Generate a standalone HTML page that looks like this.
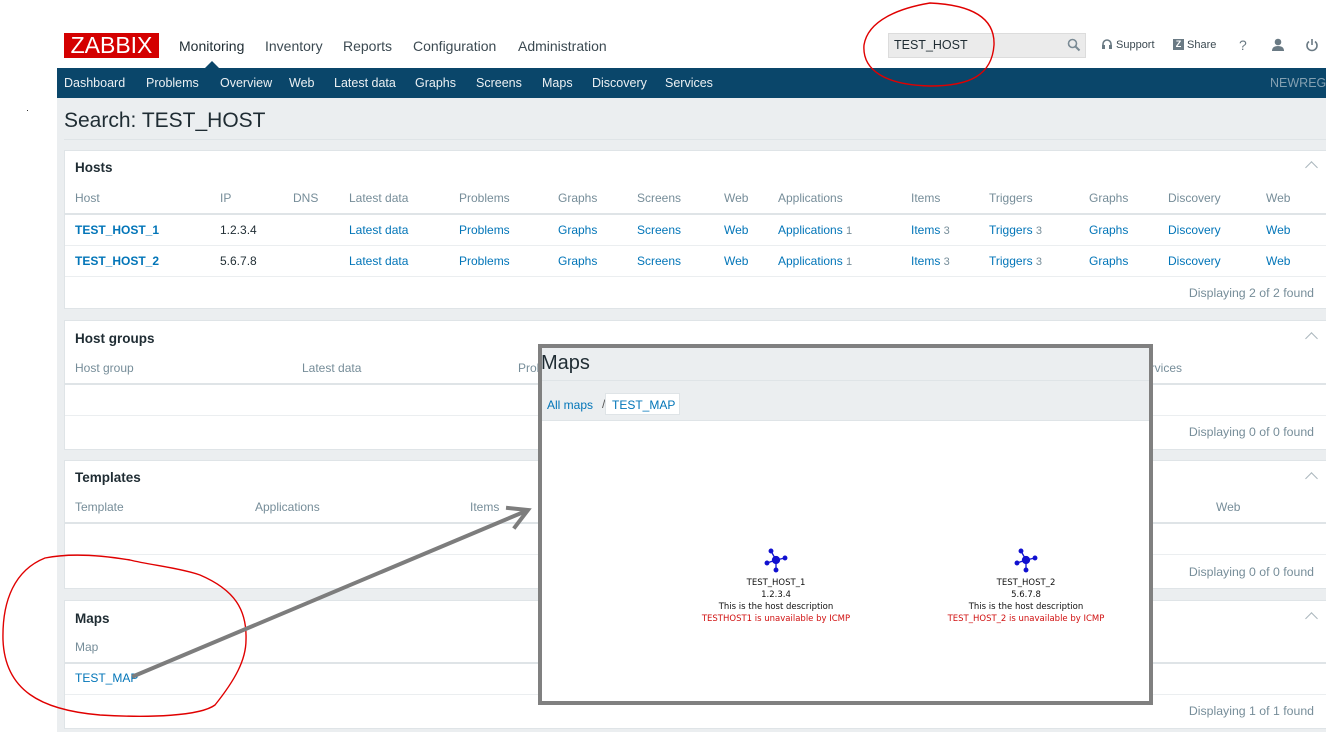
<!DOCTYPE html>
<html><head><meta charset="utf-8"><style>
*{margin:0;padding:0;box-sizing:border-box}
body{width:1326px;height:732px;position:relative;overflow:hidden;background:#fff;font-family:"Liberation Sans",Arial,sans-serif;font-size:12px;color:#1f2c33}
.a{position:absolute;white-space:nowrap}
.bar{position:absolute;left:57px;top:68px;width:1269px;height:30px;background:#0a466a}
.bar span{position:absolute;top:8px;color:#fff;font-size:12.5px;opacity:.92}
.grey{position:absolute;left:57px;top:98px;width:1269px;height:634px;background:#ebeef0}
.panel{position:absolute;left:64px;width:1262px;background:#fff;border:1px solid #dfe4e7;border-right:none}
.panel .t{position:absolute;left:10px;font-weight:bold;font-size:13.5px;color:#1f2c33}
.h{position:absolute;color:#768d99;margin-left:-1px;margin-top:-1px}
.l{position:absolute;color:#0275b8;margin-left:-1px;margin-top:-1px}
.b{font-weight:bold}
.line2{position:absolute;left:0;right:0;height:2px;background:#dfe4e7}
.line1{position:absolute;left:0;right:0;height:1px;background:#ebeef0}
.foot{position:absolute;right:12px;color:#768d99;margin-top:-1px;font-size:12.3px}
.chev{position:absolute;right:10px;width:9px;height:9px;border-left:1.5px solid #aab6bd;border-top:1.5px solid #aab6bd;transform:rotate(45deg)}
.n{color:#768d99;font-size:11px}
</style></head><body>
<div class="a" style="left:64px;top:33px;width:95px;height:25px;background:#d40000;color:#fff;font-size:23px;line-height:25px;text-align:center">ZABBIX</div>
<div class="a" style="left:179px;top:38px;font-size:14px;color:#1f2c33">Monitoring</div>
<div class="a" style="left:265px;top:38px;font-size:14px;color:#3c4a52">Inventory</div>
<div class="a" style="left:343px;top:38px;font-size:14px;color:#3c4a52">Reports</div>
<div class="a" style="left:413px;top:38px;font-size:14px;color:#3c4a52">Configuration</div>
<div class="a" style="left:518px;top:38px;font-size:14px;color:#3c4a52">Administration</div>
<div class="a" style="left:205px;top:61px;width:0;height:0;border-left:7px solid transparent;border-right:7px solid transparent;border-bottom:7px solid #0a466a"></div>
<div class="a" style="left:888px;top:33px;width:198px;height:25px;background:#ebebeb;border:1px solid #dcdcdc"></div>
<div class="a" style="left:894px;top:38px;font-size:12.5px;color:#1f2c33">TEST_HOST</div>
<svg class="a" style="left:1067px;top:38px" width="14" height="14"><circle cx="5.5" cy="5.5" r="4" fill="none" stroke="#7a8a94" stroke-width="1.6"/><line x1="8.5" y1="8.5" x2="12.5" y2="12.5" stroke="#7a8a94" stroke-width="2"/></svg>
<svg class="a" style="left:1101px;top:39px" width="12" height="12"><path d="M2 7V5a4 4 0 0 1 8 0v2" fill="none" stroke="#6a7a84" stroke-width="1.6"/><rect x="1" y="6" width="3" height="4" fill="#6a7a84"/><rect x="8" y="6" width="3" height="4" fill="#6a7a84"/></svg>
<div class="a" style="left:1116px;top:39px;font-size:11px;color:#3c4a52">Support</div>
<div class="a" style="left:1173px;top:39px;width:11px;height:11px;background:#6a7a84;color:#fff;font-size:9px;font-weight:bold;text-align:center;line-height:11px">Z</div>
<div class="a" style="left:1187px;top:39px;font-size:11px;color:#3c4a52">Share</div>
<div class="a" style="left:1239px;top:37px;font-size:14px;color:#6a7a84">?</div>
<svg class="a" style="left:1271px;top:38px" width="14" height="14"><circle cx="7" cy="4" r="3.3" fill="#6a7a84"/><path d="M1 13q0-5 6-5t6 5z" fill="#6a7a84"/></svg>
<svg class="a" style="left:1305px;top:38px" width="14" height="14"><path d="M4 3.5a5 5 0 1 0 6 0" fill="none" stroke="#6a7a84" stroke-width="1.6"/><line x1="7" y1="1" x2="7" y2="7" stroke="#6a7a84" stroke-width="1.6"/></svg>
<div class="bar">
<span style="left:7px">Dashboard</span><span style="left:89px">Problems</span><span style="left:163px">Overview</span><span style="left:232px">Web</span><span style="left:277px">Latest data</span><span style="left:358px">Graphs</span><span style="left:419px">Screens</span><span style="left:485px">Maps</span><span style="left:535px">Discovery</span><span style="left:608px">Services</span>
<span style="left:1213px;color:#8fa8b8">NEWREG</span></div>
<div class="a" style="left:27px;top:110px;width:1px;height:1px;background:#333"></div>
<div class="grey"></div>
<div class="a" style="left:64px;top:109px;font-size:21px;color:#1f2c33">Search: TEST_HOST</div>
<div class="a" style="left:64px;top:139px;width:1262px;height:1px;background:#dfe4e7"></div>

<div class="panel" style="top:150px;height:159px">
<div class="t" style="top:9px">Hosts</div><div class="chev" style="top:12px"></div>
<div class="h" style="left:11px;top:41px">Host</div><div class="h" style="left:156px;top:41px">IP</div><div class="h" style="left:229px;top:41px">DNS</div><div class="h" style="left:285px;top:41px">Latest data</div><div class="h" style="left:395px;top:41px">Problems</div><div class="h" style="left:494px;top:41px">Graphs</div><div class="h" style="left:573px;top:41px">Screens</div><div class="h" style="left:660px;top:41px">Web</div><div class="h" style="left:714px;top:41px">Applications</div><div class="h" style="left:847px;top:41px">Items</div><div class="h" style="left:925px;top:41px">Triggers</div><div class="h" style="left:1025px;top:41px">Graphs</div><div class="h" style="left:1104px;top:41px">Discovery</div><div class="h" style="left:1202px;top:41px">Web</div>
<div class="line2" style="top:62px"></div>
<div class="l b" style="left:11px;top:73px">TEST_HOST_1</div><div class="a" style="left:155px;top:72px">1.2.3.4</div><div class="l" style="left:285px;top:73px">Latest data</div><div class="l" style="left:395px;top:73px">Problems</div><div class="l" style="left:494px;top:73px">Graphs</div><div class="l" style="left:573px;top:73px">Screens</div><div class="l" style="left:660px;top:73px">Web</div><div class="l" style="left:714px;top:73px">Applications <span class="n">1</span></div><div class="l" style="left:847px;top:73px">Items <span class="n">3</span></div><div class="l" style="left:925px;top:73px">Triggers <span class="n">3</span></div><div class="l" style="left:1025px;top:73px">Graphs</div><div class="l" style="left:1104px;top:73px">Discovery</div><div class="l" style="left:1202px;top:73px">Web</div>
<div class="line1" style="top:94px"></div>
<div class="l b" style="left:11px;top:104px">TEST_HOST_2</div><div class="a" style="left:155px;top:103px">5.6.7.8</div><div class="l" style="left:285px;top:104px">Latest data</div><div class="l" style="left:395px;top:104px">Problems</div><div class="l" style="left:494px;top:104px">Graphs</div><div class="l" style="left:573px;top:104px">Screens</div><div class="l" style="left:660px;top:104px">Web</div><div class="l" style="left:714px;top:104px">Applications <span class="n">1</span></div><div class="l" style="left:847px;top:104px">Items <span class="n">3</span></div><div class="l" style="left:925px;top:104px">Triggers <span class="n">3</span></div><div class="l" style="left:1025px;top:104px">Graphs</div><div class="l" style="left:1104px;top:104px">Discovery</div><div class="l" style="left:1202px;top:104px">Web</div>
<div class="line1" style="top:125px"></div>
<div class="foot" style="top:136px">Displaying 2 of 2 found</div>
</div>

<div class="panel" style="top:320px;height:130px">
<div class="t" style="top:10px">Host groups</div><div class="chev" style="top:13px"></div>
<div class="h" style="left:11px;top:41px">Host group</div><div class="h" style="left:238px;top:41px">Latest data</div><div class="h" style="left:454px;top:41px">Problems</div><div class="h" style="left:1072px;top:41px">Services</div>
<div class="line2" style="top:62px"></div><div class="line1" style="top:94px"></div>
<div class="foot" style="top:105px">Displaying 0 of 0 found</div>
</div>

<div class="panel" style="top:460px;height:129px">
<div class="t" style="top:9px">Templates</div><div class="chev" style="top:13px"></div>
<div class="h" style="left:11px;top:40px">Template</div><div class="h" style="left:191px;top:40px">Applications</div><div class="h" style="left:406px;top:40px">Items</div><div class="h" style="left:1152px;top:40px">Web</div>
<div class="line2" style="top:61px"></div><div class="line1" style="top:93px"></div>
<div class="foot" style="top:105px">Displaying 0 of 0 found</div>
</div>

<div class="panel" style="top:600px;height:129px">
<div class="t" style="top:10px">Maps</div><div class="chev" style="top:13px"></div>
<div class="h" style="left:11px;top:40px">Map</div>
<div class="line2" style="top:61px"></div>
<div class="l" style="left:11px;top:71px">TEST_MAP</div>
<div class="line1" style="top:93px"></div>
<div class="foot" style="top:104px">Displaying 1 of 1 found</div>
</div>

<div class="a" style="left:538px;top:344px;width:615px;height:361px;border:4px solid #808080;background:#fff">
<div class="a" style="left:0;top:0;width:607px;height:73px;background:#ebeef0;border-bottom:1px solid #dfe4e7"></div>
<div class="a" style="left:0;top:32px;width:607px;height:1px;background:#dfe4e7"></div>
<div class="a" style="left:-1px;top:4px;font-size:20px;color:#1f2c33">Maps</div>
<div class="a" style="left:5px;top:50px;color:#0275b8">All maps</div>
<div class="a" style="left:60px;top:49px;color:#555">/</div>
<div class="a" style="left:63px;top:45px;width:75px;height:22px;background:#fff;border:1px solid #dfe4e7"></div>
<div class="a" style="left:70px;top:50px;color:#0275b8">TEST_MAP</div>
<svg class="a" style="left:220px;top:198px" width="30" height="30"><g stroke="#1010d0" stroke-width="1.3" fill="#1010d0"><line x1="14" y1="14" x2="9" y2="5"/><line x1="14" y1="14" x2="23" y2="12"/><line x1="14" y1="14" x2="5" y2="17"/><line x1="14" y1="14" x2="14" y2="24"/><circle cx="14" cy="14" r="3.5"/><circle cx="9" cy="5" r="1.8"/><circle cx="23" cy="12" r="1.8"/><circle cx="5" cy="17" r="1.8"/><circle cx="14" cy="24" r="1.8"/></g></svg>
<svg class="a" style="left:470px;top:198px" width="30" height="30"><g stroke="#1010d0" stroke-width="1.3" fill="#1010d0"><line x1="14" y1="14" x2="9" y2="5"/><line x1="14" y1="14" x2="23" y2="12"/><line x1="14" y1="14" x2="5" y2="17"/><line x1="14" y1="14" x2="14" y2="24"/><circle cx="14" cy="14" r="3.5"/><circle cx="9" cy="5" r="1.8"/><circle cx="23" cy="12" r="1.8"/><circle cx="5" cy="17" r="1.8"/><circle cx="14" cy="24" r="1.8"/></g></svg>
<div class="a" style="left:134px;top:229px;width:200px;text-align:center;font-family:'DejaVu Sans',sans-serif;font-size:8.5px;line-height:12px;color:#111">TEST_HOST_1<br>1.2.3.4<br>This is the host description<br><span style="color:#d01010">TESTHOST1 is unavailable by ICMP</span></div>
<div class="a" style="left:384px;top:229px;width:200px;text-align:center;font-family:'DejaVu Sans',sans-serif;font-size:8.5px;line-height:12px;color:#111">TEST_HOST_2<br>5.6.7.8<br>This is the host description<br><span style="color:#d01010">TEST_HOST_2 is unavailable by ICMP</span></div>
</div>

<svg class="a" style="left:0;top:0" width="1326" height="732">
<g fill="none" stroke="#e00000" stroke-width="1.4">
<path d="M930 3C900 8 868 20 864 45C862 70 885 85 930 86C970 86 992 75 994 45C995 20 975 5 930 3Z"/>
<path d="M45 558C15 570 2 600 3 640C5 690 40 710 100 715C150 718 200 716 215 705C235 680 246 660 246 640C247 610 235 590 200 575C180 568 150 565 130 560C100 555 70 553 45 558Z"/>
</g>
<g stroke="#7d7d7d" stroke-width="4" fill="none" stroke-linecap="square">
<line x1="134" y1="676" x2="526" y2="511"/>
<path d="M508 508L528 510L515 527"/>
</g>
</svg>
</body></html>
